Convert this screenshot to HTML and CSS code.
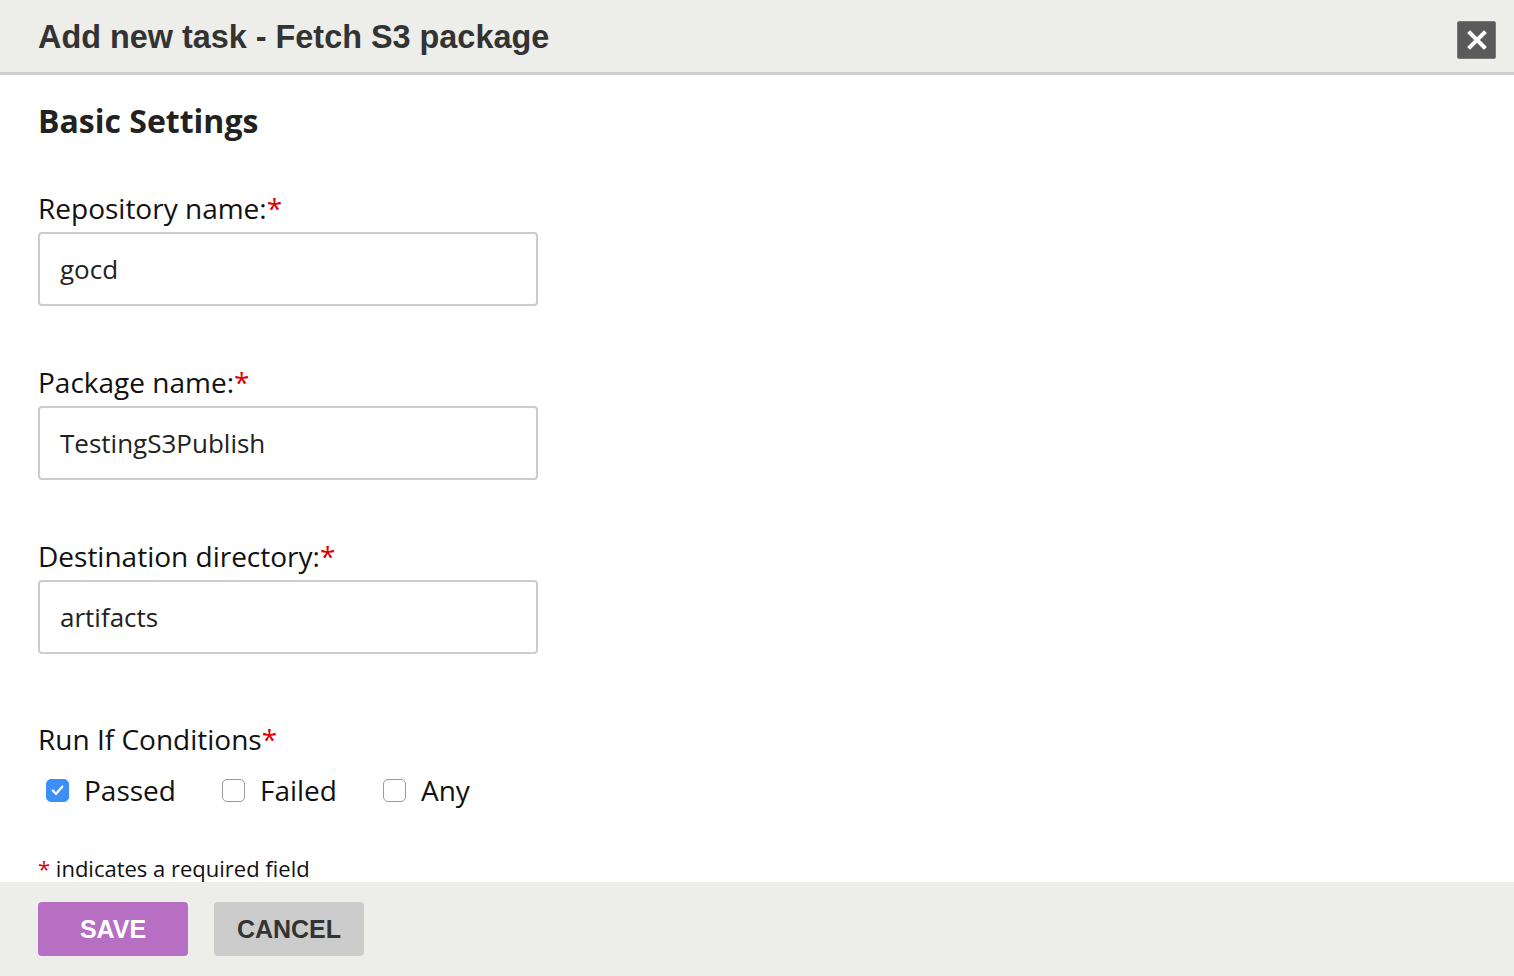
FILE: index.html
```html
<!DOCTYPE html>
<html>
<head>
<meta charset="utf-8">
<link rel="stylesheet" href="styles.css">
</head>
<body>
<div class="modal">
  <div class="header">
    <h1 class="title">Add new task - Fetch S3 package</h1>
    <button class="close" aria-label="Close">
      <svg width="22" height="22" viewBox="0 0 22 22"><path d="M4 4 L18 18 M18 4 L4 18" stroke="#fff" stroke-width="4" stroke-linecap="square"/></svg>
    </button>
  </div>
  <div class="body">
    <h2 class="section">Basic Settings</h2>
    <div class="field">
      <label class="label">Repository name:<span class="req">*</span></label>
      <div class="input">gocd</div>
    </div>
    <div class="field">
      <label class="label">Package name:<span class="req">*</span></label>
      <div class="input">TestingS3Publish</div>
    </div>
    <div class="field">
      <label class="label">Destination directory:<span class="req">*</span></label>
      <div class="input">artifacts</div>
    </div>
    <div class="runif">
      <div class="label">Run If Conditions<span class="req">*</span></div>
      <div class="checks">
        <div class="check"><span class="box checked"><svg width="22" height="22" viewBox="0 0 22 22"><path d="M6 11.5 L9.5 15 L16 7.5" stroke="#fff" stroke-width="2.4" fill="none" stroke-linecap="round" stroke-linejoin="round"/></svg></span><span class="ctext">Passed</span></div>
        <div class="check"><span class="box"></span><span class="ctext">Failed</span></div>
        <div class="check"><span class="box"></span><span class="ctext">Any</span></div>
      </div>
    </div>
    <p class="note"><span class="req">*</span> indicates a required field</p>
  </div>
  <div class="footer">
    <button class="btn save">SAVE</button>
    <button class="btn cancel">CANCEL</button>
  </div>
</div>
</body>
</html>
```
FILE: styles.css
```css
html, body {
  margin: 0;
  padding: 0;
  height: 100%;
}
body {
  font-family: "Open Sans", sans-serif;
  color: #222;
  background: #fff;
}
.modal {
  height: 976px;
  display: flex;
  flex-direction: column;
  overflow: hidden;
}
.header {
  height: 72px;
  flex: none;
  background: #ededea;
  border-bottom: 3px solid #cfcfcd;
  display: flex;
  align-items: center;
  justify-content: space-between;
  padding: 0 18px 0 38px;
}
.title {
  margin: 0;
  font-family: "Liberation Sans", Arial, sans-serif;
  font-weight: bold;
  font-size: 32.4px;
  color: #333;
  position: relative;
  top: 1px;
}
.close {
  width: 39px;
  height: 38px;
  background: #5a5a5a;
  border: 1px solid #7a7a7a;
  border-radius: 2px;
  padding: 0;
  display: flex;
  align-items: center;
  justify-content: center;
  position: relative;
  top: 4px;
}
.body {
  flex: 1;
  overflow: hidden;
  padding: 0 38px;
}
.section {
  margin: 26px 0 0;
  font-size: 32px;
  font-weight: bold;
  color: #222;
  line-height: 40px;
}
.field {
  margin-top: 51px;
}
.field + .field {
  margin-top: 60px;
}
.label {
  display: block;
  font-size: 28px;
  line-height: 32px;
  color: #111;
}
.req {
  color: #d00;
}
.input {
  margin-top: 8px;
  box-sizing: border-box;
  width: 500px;
  height: 74px;
  border: 2px solid #cccccc;
  border-radius: 4px;
  padding: 0 20px;
  display: flex;
  align-items: center;
  font-size: 26px;
  color: #222;
}
.runif {
  margin-top: 69px;
}
.checks {
  display: flex;
  align-items: center;
  margin-top: 16px;
  padding-left: 8px;
}
.check {
  display: flex;
  align-items: center;
  margin-right: 46px;
}
.box {
  box-sizing: border-box;
  width: 23px;
  height: 23px;
  border: 1.5px solid #9a9a9a;
  border-radius: 5px;
  background: #fff;
  display: flex;
  align-items: center;
  justify-content: center;
}
.box.checked {
  background: #3b8ff6;
  border-color: #3b8ff6;
}
.ctext {
  margin-left: 15px;
  font-size: 28px;
  color: #111;
}
.note {
  margin: 44px 0 0;
  font-size: 22px;
  color: #111;
}
.footer {
  height: 94px;
  flex: none;
  background: #ededea;
  display: flex;
  align-items: center;
  padding: 0 38px;
  gap: 26px;
}
.btn {
  width: 150px;
  height: 54px;
  border: none;
  border-radius: 4px;
  font-family: "Liberation Sans", Arial, sans-serif;
  font-weight: bold;
  font-size: 25px;
  padding: 0;
}
.save {
  background: #b66fc2;
  color: #fff;
}
.cancel {
  background: #cccccc;
  color: #333;
}
```
